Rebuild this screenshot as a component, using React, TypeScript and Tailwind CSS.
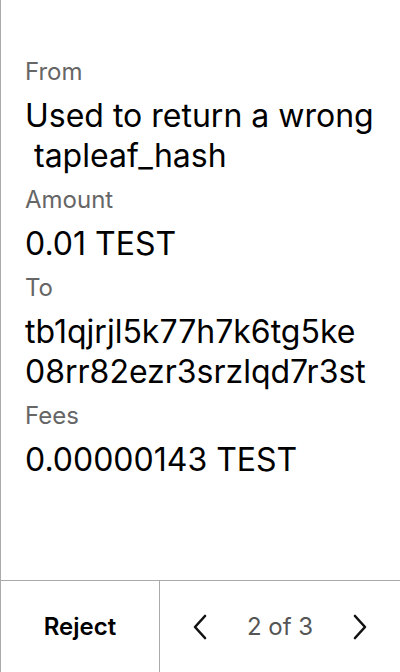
import React from 'react';

interface Field {
  label: string;
  value: string;
  breakAll?: boolean;
}

const fields: Field[] = [
  { label: 'From', value: 'Used to return a wrong \u00a0tapleaf_hash' },
  { label: 'Amount', value: '0.01 TEST' },
  { label: 'To', value: 'tb1qjrjl5k77h7k6tg5ke08rr82ezr3srzlqd7r3st', breakAll: true },
  { label: 'Fees', value: '0.00000143 TEST' },
];

const ChevronLeft = () => (
  <svg width="16" height="26" viewBox="0 0 16 26" fill="none" stroke="#111" strokeWidth="2.6" strokeLinecap="round" strokeLinejoin="round">
    <path d="M13 2 L3 13 L13 24" />
  </svg>
);

const ChevronRight = () => (
  <svg width="16" height="26" viewBox="0 0 16 26" fill="none" stroke="#111" strokeWidth="2.6" strokeLinecap="round" strokeLinejoin="round">
    <path d="M3 2 L13 13 L3 24" />
  </svg>
);

const App: React.FC = () => {
  return (
    <div
      className="h-screen w-full flex flex-col bg-white border-l border-[#aaaaaa]"
      style={{ fontFamily: 'Inter, "Noto Sans", sans-serif' }}
    >
      {/* Transaction details */}
      <div className="flex-1 flex flex-col gap-2 pt-[56px] pl-6 pr-4">
        {fields.map((f) => (
          <React.Fragment key={f.label}>
            <div className="text-[24px] leading-8 text-[#666666]">{f.label}</div>
            <div className={`text-[32px] leading-10 text-black ${f.breakAll ? 'break-all mr-3' : ''}`}>
              {f.value}
            </div>
          </React.Fragment>
        ))}
      </div>

      {/* Footer actions */}
      <div className="h-[92px] flex border-t border-[#aaaaaa]">
        <button className="w-[159px] flex items-center justify-center border-r border-[#aaaaaa] text-[24px] font-semibold text-black">
          Reject
        </button>
        <div className="flex-1 flex items-center justify-between px-[32px]">
          <button className="flex items-center">
            <ChevronLeft />
          </button>
          <span className="text-[24px] text-[#555555]">2 of 3</span>
          <button className="flex items-center">
            <ChevronRight />
          </button>
        </div>
      </div>
    </div>
  );
};

export default App;
